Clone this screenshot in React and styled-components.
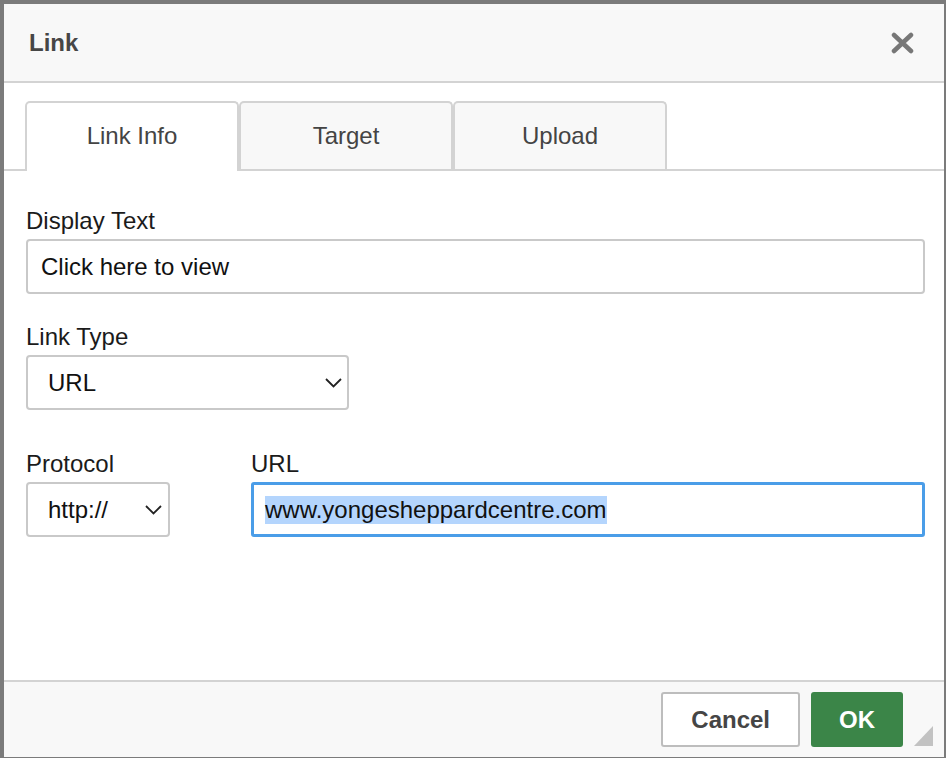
import React from "react";
import styled, { createGlobalStyle } from "styled-components";

const GlobalStyle = createGlobalStyle`
  html, body {
    margin: 0;
    padding: 0;
    background: #7b7b7b;
  }
  body {
    font-family: "Liberation Sans", Arial, Helvetica, sans-serif;
  }
  * {
    box-sizing: border-box;
  }
`;

const Page = styled.div`
  width: 946px;
  height: 758px;
  padding: 4px 2px 1px 4px;
  overflow: hidden;
`;

const Dialog = styled.div`
  position: relative;
  width: 940px;
  height: 753px;
  background: #fff;
  display: flex;
  flex-direction: column;
`;

const Header = styled.div`
  height: 79px;
  flex: none;
  display: flex;
  align-items: center;
  justify-content: space-between;
  padding: 0 30px 0 25px;
  background: #f8f8f8;
  border-bottom: 2px solid #d3d3d3;

  h1 {
    margin: 0;
    font-size: 24px;
    font-weight: 700;
    color: #464646;
  }
`;

const CloseButton = styled.button`
  display: flex;
  padding: 0;
  border: 0;
  background: none;
  cursor: pointer;
`;

const Body = styled.div`
  flex: 1;
  padding-top: 18px;
`;

const TabBar = styled.div`
  display: flex;
  padding-left: 21px;
  border-bottom: 2px solid #d3d3d3;
`;

const Tab = styled.div`
  width: 214px;
  display: flex;
  align-items: center;
  justify-content: center;
  font-size: 24px;
  color: #444;
  border: 2px solid #d3d3d3;
  border-bottom: 0;
  border-radius: 5px 5px 0 0;
  background: ${props => (props.active ? "#fff" : "#f8f8f8")};
  margin-bottom: ${props => (props.active ? "-2px" : "0")};
  height: ${props => (props.active ? "70px" : "68px")};
  padding-bottom: ${props => (props.active ? "2px" : "0")};
  cursor: pointer;
`;

const Form = styled.div`
  padding: 36px 19px 0 22px;
`;

const Field = styled.div`
  display: flex;
  flex-direction: column;
  gap: 4px;
  margin-top: ${props => props.gap || 0}px;
  width: ${props => (props.width ? `${props.width}px` : "auto")};
  flex: ${props => (props.grow ? 1 : "none")};
`;

const Row = styled.div`
  display: flex;
  gap: 81px;
  margin-top: ${props => props.gap || 0}px;
`;

const Label = styled.label`
  font-size: 24px;
  line-height: 28px;
  color: #1b1b1b;
`;

const TextInput = styled.input`
  height: 55px;
  width: 100%;
  padding: 0 13px;
  font: inherit;
  font-size: 24px;
  color: #111;
  border: 2px solid #c9c9c9;
  border-radius: 4px;
  background: #fff;
  outline: none;
`;

const FocusedBox = styled.div`
  height: 55px;
  display: flex;
  align-items: center;
  padding: 0 11px;
  font-size: 24px;
  color: #111;
  border: 3px solid #4a9de8;
  border-radius: 3px;
  background: #fff;

  span {
    background: #b4d5fd;
    line-height: 28px;
  }
`;

const SelectWrap = styled.div`
  position: relative;
  width: ${props => props.width}px;

  svg {
    position: absolute;
    top: 23px;
    right: ${props => props.chevronRight}px;
    pointer-events: none;
  }
`;

const Select = styled.select`
  appearance: none;
  -webkit-appearance: none;
  width: 100%;
  height: 55px;
  padding: 0 0 0 20px;
  font: inherit;
  font-size: 24px;
  color: #111;
  border: 2px solid #c9c9c9;
  border-radius: 4px;
  background: #fff;
  outline: none;
`;

const Footer = styled.div`
  flex: none;
  height: 77px;
  display: flex;
  justify-content: flex-end;
  align-items: center;
  gap: 11px;
  padding-right: 41px;
  background: #f8f8f8;
  border-top: 2px solid #d3d3d3;
`;

const Button = styled.button`
  height: 55px;
  padding: 0 28px;
  font-family: inherit;
  font-size: 24px;
  font-weight: 700;
  border-radius: 3px;
  cursor: pointer;
  color: ${props => (props.primary ? "#fff" : "#454545")};
  background: ${props => (props.primary ? "#3b8548" : "#fff")};
  border: ${props => (props.primary ? "0" : "2px solid #bdbdbd")};
`;

const Grip = styled.svg`
  position: absolute;
  right: 11px;
  bottom: 11px;
`;

const Chevron = () => (
  <svg width="17" height="10" viewBox="0 0 17 10">
    <polyline points="1,1 8.5,8.5 16,1" fill="none" stroke="#222" strokeWidth="1.8" />
  </svg>
);

const App = () => {
  return (
    <Page>
      <GlobalStyle />
      <Dialog>
        <Header>
          <h1>Link</h1>
          <CloseButton aria-label="Close">
            <svg width="23" height="22" viewBox="0 0 23 22">
              <path d="M3 3 L20 19 M20 3 L3 19" stroke="#777" strokeWidth="4.5" strokeLinecap="round" />
            </svg>
          </CloseButton>
        </Header>

        <Body>
          <TabBar>
            <Tab active>Link Info</Tab>
            <Tab>Target</Tab>
            <Tab>Upload</Tab>
          </TabBar>

          <Form>
            <Field>
              <Label>Display Text</Label>
              <TextInput defaultValue="Click here to view" />
            </Field>

            <Field gap={29}>
              <Label>Link Type</Label>
              <SelectWrap width={323} chevronRight={7}>
                <Select defaultValue="url">
                  <option value="url">URL</option>
                  <option value="anchor">Link to anchor in the text</option>
                  <option value="email">E-mail</option>
                </Select>
                <Chevron />
              </SelectWrap>
            </Field>

            <Row gap={40}>
              <Field width={144}>
                <Label>Protocol</Label>
                <SelectWrap width={144} chevronRight={8}>
                  <Select defaultValue="http">
                    <option value="http">http://</option>
                    <option value="https">https://</option>
                    <option value="ftp">ftp://</option>
                  </Select>
                  <Chevron />
                </SelectWrap>
              </Field>
              <Field grow>
                <Label>URL</Label>
                <FocusedBox>
                  <span>www.yongesheppardcentre.com</span>
                </FocusedBox>
              </Field>
            </Row>
          </Form>
        </Body>

        <Footer>
          <Button>Cancel</Button>
          <Button primary>OK</Button>
        </Footer>
        <Grip width="19" height="20" viewBox="0 0 19 20">
          <polygon points="19,0 19,20 0,20" fill="#c2c2c2" />
        </Grip>
      </Dialog>
    </Page>
  );
};

export default App;
